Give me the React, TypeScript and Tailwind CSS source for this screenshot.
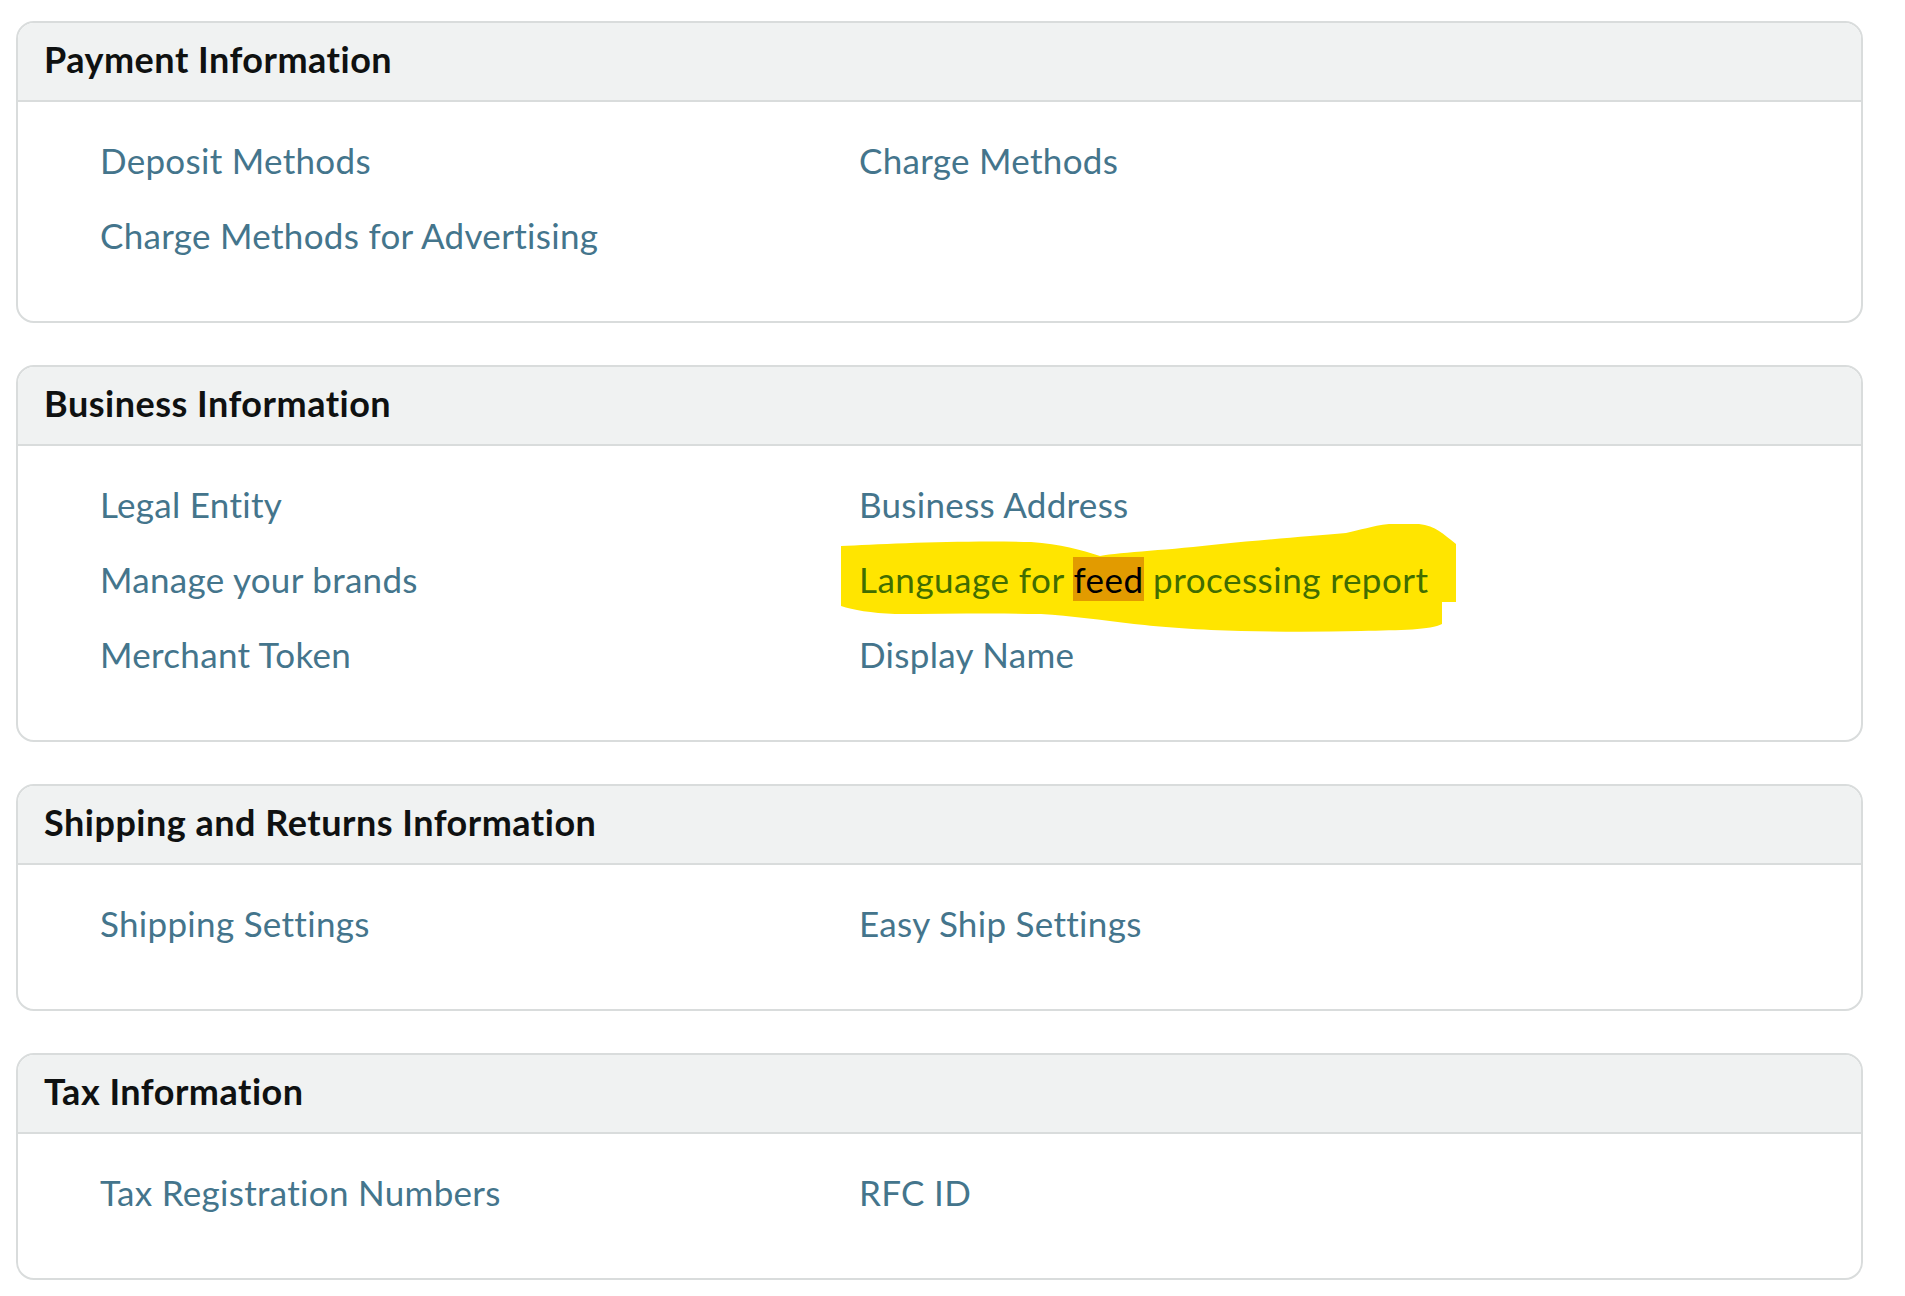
const sections: { title: string; rows: [string, string][] }[] = [
  {
    title: "Payment Information",
    rows: [
      ["Deposit Methods", "Charge Methods"],
      ["Charge Methods for Advertising", ""],
    ],
  },
  {
    title: "Business Information",
    rows: [
      ["Legal Entity", "Business Address"],
      ["Manage your brands", "__highlight__"],
      ["Merchant Token", "Display Name"],
    ],
  },
  {
    title: "Shipping and Returns Information",
    rows: [["Shipping Settings", "Easy Ship Settings"]],
  },
  {
    title: "Tax Information",
    rows: [["Tax Registration Numbers", "RFC ID"]],
  },
];

const Highlighted = () => {
  return (
    <span className="relative inline-block">
      {/* marker scribble drawn over the screenshot */}
      <svg
        className="absolute left-[-18px] top-[-33px] pointer-events-none"
        width="615"
        height="108"
        viewBox="0 0 615 108"
      >
        <path
          fill="#ffe500"
          d="M0 22 C40 20 120 16 190 18 C220 20 240 26 259 32 C280 28 330 26 380 20 C420 16 470 12 505 9 C520 6 530 2 548 0 L578 0 C595 2 602 10 615 20 L615 78 L601 78 L601 100 C590 106 560 106 520 107 C480 108 440 108 400 107 C360 106 320 103 293 100 C260 96 230 92 200 90 C150 89 100 90 54 90 C30 89 12 86 0 82 Z"
        />
      </svg>
      <span className="relative text-[#416d00] tracking-[0.5px]">
        Language for{" "}
        <span className="inline-block leading-[44px] bg-[#e29b00] text-black">feed</span>{" "}
        processing report
      </span>
    </span>
  );
};

const Section = ({ title, rows }: { title: string; rows: [string, string][] }) => {
  return (
    <div className="border-2 border-[#d9dcdc] rounded-[18px] overflow-hidden bg-white">
      <div className="h-[79px] bg-[#f0f2f2] border-b-2 border-[#d9dcdc] flex items-center pl-[26px] pb-[5px]">
        <h2 className="text-[36px] font-bold tracking-[0.5px] text-[#0f1111] leading-none">{title}</h2>
      </div>
      <div className="pt-[36px] pb-[64px] pl-[82px] grid grid-cols-[759px_1fr] gap-y-[31px] text-[35px] tracking-[0.3px] leading-[44px] text-[#44758c]">
        {rows.map(([a, b], i) => (
          <div key={i} className="contents">
            <div>
              <a href="#" className="hover:underline">
                {a}
              </a>
            </div>
            <div>
              {b === "__highlight__" ? (
                <Highlighted />
              ) : b ? (
                <a href="#" className="hover:underline">
                  {b}
                </a>
              ) : null}
            </div>
          </div>
        ))}
      </div>
    </div>
  );
};

export default function App() {
  return (
    <div
      className="min-h-screen bg-white pt-[21px] pl-4 pr-[42px] pb-4 flex flex-col gap-[42px]"
      style={{ fontFamily: "Lato, 'Open Sans', sans-serif" }}
    >
      {sections.map((s) => (
        <Section key={s.title} title={s.title} rows={s.rows} />
      ))}
    </div>
  );
}
